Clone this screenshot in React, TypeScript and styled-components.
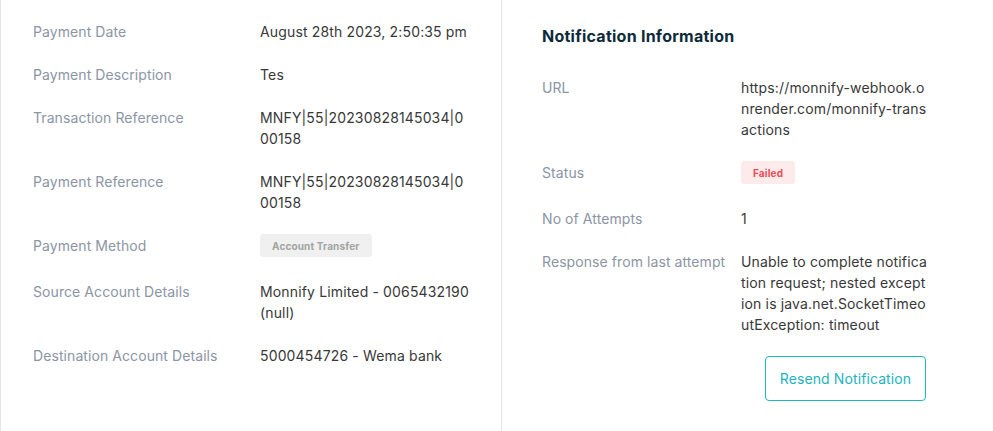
import styled, { createGlobalStyle } from "styled-components";

const GlobalStyle = createGlobalStyle`
  html, body {
    margin: 0;
    padding: 0;
    background: #ffffff;
    font-family: Inter, "Noto Sans", sans-serif;
    -webkit-font-smoothing: antialiased;
  }
  body {
    height: 431px;
    overflow: hidden;
  }
`;

const Card = styled.div`
  display: flex;
  height: 431px;
  border-left: 1px solid #e4e4e4;
  background: #ffffff;
`;

const LeftPanel = styled.div`
  width: 501px;
  box-sizing: border-box;
  border-right: 1px solid #e6e6e6;
  padding: 21px 0 0 32px;
`;

const RightPanel = styled.div`
  flex: 1;
  padding: 25px 0 0 40px;
`;

const Heading = styled.h3`
  margin: 0 0 29px;
  font-size: 16px;
  line-height: 23px;
  font-weight: 700;
  letter-spacing: 0.25px;
  color: #0c2a3a;
`;

const DetailGrid = styled.div<{ $labelWidth: number; $valueWidth: number }>`
  display: grid;
  grid-template-columns: ${(p) => p.$labelWidth}px ${(p) => p.$valueWidth}px;
  row-gap: 22px;
  align-items: start;
`;

const Label = styled.div`
  font-size: 14px;
  line-height: 21px;
  letter-spacing: 0.08px;
  color: #8b95a5;
`;

const Value = styled.div`
  font-size: 14px;
  line-height: 21px;
  letter-spacing: 0.15px;
  color: #383838;
  word-break: break-all;
`;

const Badge = styled.div<{ $tone: "neutral" | "danger" }>`
  display: flex;
  align-items: center;
  justify-content: center;
  width: fit-content;
  height: 23px;
  margin: -1px 0 2px;
  padding: 0 12px;
  border-radius: 3px;
  font-size: 10px;
  line-height: 1;
  font-weight: 700;
  background: ${(p) => (p.$tone === "danger" ? "#fdeaea" : "#f0f0f0")};
  color: ${(p) => (p.$tone === "danger" ? "#ec4d57" : "#a3a3a3")};
`;

const Actions = styled.div`
  width: 384px;
  display: flex;
  justify-content: flex-end;
  margin-top: 21px;
`;

const ResendButton = styled.button`
  width: 161px;
  height: 45px;
  border: 1px solid #1db7c2;
  border-radius: 4px;
  background: #ffffff;
  color: #22b3bf;
  font-family: Inter, "Noto Sans", sans-serif;
  font-size: 14px;
  letter-spacing: 0.1px;
  cursor: pointer;
`;

const paymentRows: { label: string; value: string; badge?: boolean }[] = [
  { label: "Payment Date", value: "August 28th 2023, 2:50:35 pm" },
  { label: "Payment Description", value: "Tes" },
  { label: "Transaction Reference", value: "MNFY|55|20230828145034|000158" },
  { label: "Payment Reference", value: "MNFY|55|20230828145034|000158" },
  { label: "Payment Method", value: "Account Transfer", badge: true },
  { label: "Source Account Details", value: "Monnify Limited - 0065432190 (null)" },
  { label: "Destination Account Details", value: "5000454726 - Wema bank" },
];

const App = () => {
  return (
    <>
      <GlobalStyle />
      <Card>
        <LeftPanel>
          <DetailGrid $labelWidth={227} $valueWidth={211}>
            {paymentRows.map((row) => [
              <Label key={`${row.label}-label`}>{row.label}</Label>,
              <Value key={`${row.label}-value`}>
                {row.badge ? <Badge $tone="neutral">{row.value}</Badge> : row.value}
              </Value>,
            ])}
          </DetailGrid>
        </LeftPanel>

        <RightPanel>
          <Heading>Notification Information</Heading>
          <DetailGrid $labelWidth={199} $valueWidth={186.5}>
            <Label>URL</Label>
            <Value>https://monnify-webhook.onrender.com/monnify-transactions</Value>
            <Label>Status</Label>
            <Value>
              <Badge $tone="danger">Failed</Badge>
            </Value>
            <Label>No of Attempts</Label>
            <Value>1</Value>
            <Label>Response from last attempt</Label>
            <Value>
              Unable to complete notification request; nested exception is java.net.SocketTimeoutException: timeout
            </Value>
          </DetailGrid>
          <Actions>
            <ResendButton>Resend Notification</ResendButton>
          </Actions>
        </RightPanel>
      </Card>
    </>
  );
};

export default App;
